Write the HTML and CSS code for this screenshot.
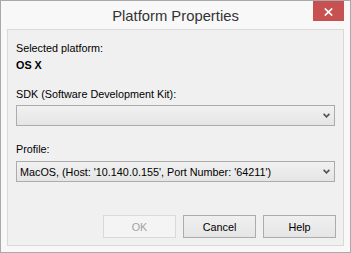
FILE: index.html
```html
<!DOCTYPE html>
<html lang="en">
<head>
    <meta charset="UTF-8">
    <title>Platform Properties</title>
    <link rel="stylesheet" href="styles.css">
</head>
<body>
    <div class="window">
        <div class="titlebar">
            <div class="title">Platform Properties</div>
            <div class="close">
                <svg width="9" height="8" viewBox="0 0 9 8"><path d="M0.8 0.5 L8.2 7.5 M8.2 0.5 L0.8 7.5" stroke="#fff" stroke-width="1.7"/></svg>
            </div>
        </div>
        <div class="client">
            <div class="label first">Selected platform:</div>
            <div class="platform">OS X</div>
            <div class="label sdk">SDK (Software Development Kit):</div>
            <div class="combo">
                <span class="combo-text"></span>
                <svg class="arrow" width="7" height="5" viewBox="0 0 7 5"><path d="M0.6 0.8 L3.5 3.8 L6.4 0.8" fill="none" stroke="#555" stroke-width="1.7"/></svg>
            </div>
            <div class="label profile">Profile:</div>
            <div class="combo profile-combo">
                <span class="combo-text">MacOS, (Host: '10.140.0.155', Port Number: '64211')</span>
                <svg class="arrow" width="7" height="5" viewBox="0 0 7 5"><path d="M0.6 0.8 L3.5 3.8 L6.4 0.8" fill="none" stroke="#555" stroke-width="1.7"/></svg>
            </div>
            <div class="buttons">
                <button class="btn" disabled>OK</button>
                <button class="btn">Cancel</button>
                <button class="btn">Help</button>
            </div>
        </div>
    </div>
</body>
</html>
```

FILE: styles.css
```css
body {
    margin: 0;
    padding: 0;
    font-family: "Liberation Sans", Arial, sans-serif;
    font-size: 10.8px;
    color: #000;
    background: #fff;
}
.window {
    width: 351px;
    height: 253px;
    box-sizing: border-box;
    border: 1px solid #a9a9a9;
    background: #f8f8f8;
    display: flex;
    flex-direction: column;
    padding: 0 6px 6px 6px;
    position: relative;
}
.titlebar {
    height: 28px;
    flex: none;
}
.title {
    text-align: center;
    font-size: 14.8px;
    color: #333;
    line-height: 28px;
    padding-top: 1px;
}
.close {
    position: absolute;
    right: 6px;
    top: 0;
    width: 31px;
    height: 20px;
    background: #c75050;
    display: flex;
    align-items: center;
    justify-content: center;
    padding-top: 1px;
    box-sizing: border-box;
}
.client {
    flex: 1;
    border: 1px solid #d9d9d9;
    background: #f0f0f0;
    padding: 10px 7px 0 8px;
    display: flex;
    flex-direction: column;
}
.label {
    line-height: 16px;
}
.platform {
    font-weight: bold;
    line-height: 16px;
    margin-top: 1px;
}
.sdk {
    margin-top: 13px;
}
.profile {
    margin-top: 15px;
}
.combo {
    margin-top: 3px;
    margin-right: 1px;
    height: 21px;
    box-sizing: border-box;
    border: 1px solid #acacac;
    background: linear-gradient(#f1f1f1, #e5e5e5);
    display: flex;
    align-items: center;
    padding: 1px 4px 0 3px;
}
.profile-combo {
    margin-top: 4px;
}
.combo-text {
    flex: 1;
    white-space: nowrap;
}
.arrow {
    margin-top: -1px;
}
.buttons {
    margin-top: auto;
    margin-bottom: 7px;
    display: flex;
    justify-content: flex-end;
    gap: 7px;
}
.btn {
    width: 73px;
    height: 23px;
    font-family: inherit;
    font-size: 10.8px;
    border: 1px solid #acacac;
    background: linear-gradient(#f0f0f0, #e5e5e5);
    color: #000;
    padding: 0;
}
.btn:disabled {
    border-color: #d9d9d9;
    background: #f4f4f4;
    color: #a3a3a3;
}
```
